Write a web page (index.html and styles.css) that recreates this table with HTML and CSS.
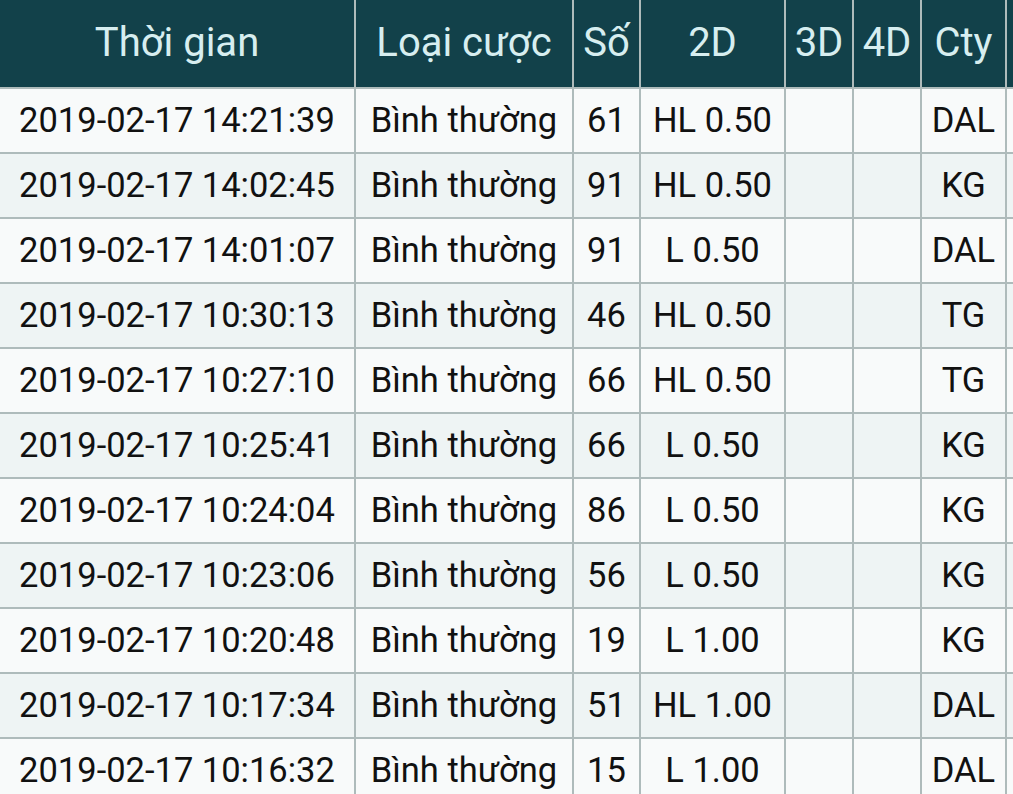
FILE: index.html
```html
<!DOCTYPE html>
<html lang="vi">
<head>
<meta charset="utf-8">
<title>Lịch sử cược</title>
<link rel="stylesheet" href="styles.css">
</head>
<body>
<div class="table" role="table">
  <div class="row head" role="row">
    <div class="cell">Thời gian</div><div class="cell">Loại cược</div><div class="cell">Số</div><div class="cell">2D</div><div class="cell">3D</div><div class="cell">4D</div><div class="cell">Cty</div><div class="cell"></div>
  </div>
  <div class="row odd" role="row">
    <div class="cell">2019-02-17 14:21:39</div><div class="cell">Bình thường</div><div class="cell">61</div><div class="cell">HL 0.50</div><div class="cell"></div><div class="cell"></div><div class="cell">DAL</div><div class="cell"></div>
  </div>
  <div class="row even" role="row">
    <div class="cell">2019-02-17 14:02:45</div><div class="cell">Bình thường</div><div class="cell">91</div><div class="cell">HL 0.50</div><div class="cell"></div><div class="cell"></div><div class="cell">KG</div><div class="cell"></div>
  </div>
  <div class="row odd" role="row">
    <div class="cell">2019-02-17 14:01:07</div><div class="cell">Bình thường</div><div class="cell">91</div><div class="cell">L 0.50</div><div class="cell"></div><div class="cell"></div><div class="cell">DAL</div><div class="cell"></div>
  </div>
  <div class="row even" role="row">
    <div class="cell">2019-02-17 10:30:13</div><div class="cell">Bình thường</div><div class="cell">46</div><div class="cell">HL 0.50</div><div class="cell"></div><div class="cell"></div><div class="cell">TG</div><div class="cell"></div>
  </div>
  <div class="row odd" role="row">
    <div class="cell">2019-02-17 10:27:10</div><div class="cell">Bình thường</div><div class="cell">66</div><div class="cell">HL 0.50</div><div class="cell"></div><div class="cell"></div><div class="cell">TG</div><div class="cell"></div>
  </div>
  <div class="row even" role="row">
    <div class="cell">2019-02-17 10:25:41</div><div class="cell">Bình thường</div><div class="cell">66</div><div class="cell">L 0.50</div><div class="cell"></div><div class="cell"></div><div class="cell">KG</div><div class="cell"></div>
  </div>
  <div class="row odd" role="row">
    <div class="cell">2019-02-17 10:24:04</div><div class="cell">Bình thường</div><div class="cell">86</div><div class="cell">L 0.50</div><div class="cell"></div><div class="cell"></div><div class="cell">KG</div><div class="cell"></div>
  </div>
  <div class="row even" role="row">
    <div class="cell">2019-02-17 10:23:06</div><div class="cell">Bình thường</div><div class="cell">56</div><div class="cell">L 0.50</div><div class="cell"></div><div class="cell"></div><div class="cell">KG</div><div class="cell"></div>
  </div>
  <div class="row odd" role="row">
    <div class="cell">2019-02-17 10:20:48</div><div class="cell">Bình thường</div><div class="cell">19</div><div class="cell">L 1.00</div><div class="cell"></div><div class="cell"></div><div class="cell">KG</div><div class="cell"></div>
  </div>
  <div class="row even" role="row">
    <div class="cell">2019-02-17 10:17:34</div><div class="cell">Bình thường</div><div class="cell">51</div><div class="cell">HL 1.00</div><div class="cell"></div><div class="cell"></div><div class="cell">DAL</div><div class="cell"></div>
  </div>
  <div class="row odd" role="row">
    <div class="cell">2019-02-17 10:16:32</div><div class="cell">Bình thường</div><div class="cell">15</div><div class="cell">L 1.00</div><div class="cell"></div><div class="cell"></div><div class="cell">DAL</div><div class="cell"></div>
  </div>
</div>
</body>
</html>
```

FILE: styles.css
```css
html, body {
  margin: 0;
  padding: 0;
  overflow: hidden;
  background: #f8fafa;
}

body {
  font-family: Roboto, "Noto Sans", sans-serif;
  color: #111;
}

.table {
  display: flex;
  flex-direction: column;
  width: 1013px;
  overflow: hidden;
}

.row {
  display: grid;
  grid-template-columns: 356px 218px 67px 145px 68px 68px 85px 100px;
  height: 65px;
}

.cell {
  box-sizing: border-box;
  border-right: 2px solid #aebbbb;
  border-bottom: 2px solid #aebbbb;
  display: flex;
  align-items: center;
  justify-content: center;
  white-space: nowrap;
  font-size: 34.5px;
  line-height: 1;
}

.head {
  height: 89px;
  background: #12414a;
}

.head .cell {
  color: #d7eef0;
  font-size: 40px;
  padding-bottom: 2px;
}

.odd {
  background: #f8fafa;
}

.even {
  background: #eef4f4;
}
```
